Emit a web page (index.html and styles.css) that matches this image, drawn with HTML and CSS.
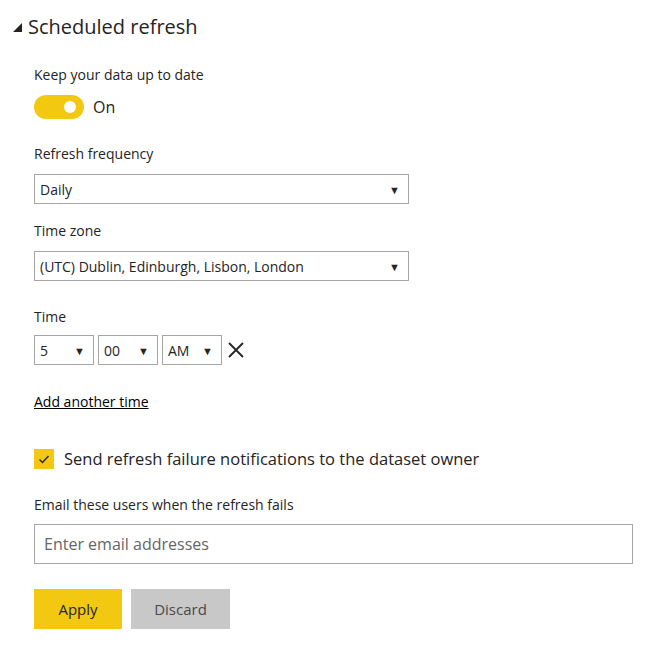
FILE: index.html
```html
<!DOCTYPE html>
<html>
<head>
<meta charset="utf-8">
<link rel="stylesheet" href="styles.css">
</head>
<body>
<div class="panel">
  <div class="heading">
    <svg class="tri" width="9" height="9" viewBox="0 0 9 9"><polygon points="9,0 9,9 0,9" fill="#252423"/></svg>
    <span>Scheduled refresh</span>
  </div>
  <div class="section">
    <div class="label l-keep">Keep your data up to date</div>
    <div class="toggle-row">
      <div class="toggle"><div class="knob"></div></div>
      <span class="on">On</span>
    </div>
    <div class="label l-freq">Refresh frequency</div>
    <div class="select wide"><span>Daily</span><span class="arrow">▼</span></div>
    <div class="label l-tz">Time zone</div>
    <div class="select wide"><span>(UTC) Dublin, Edinburgh, Lisbon, London</span><span class="arrow">▼</span></div>
    <div class="label l-time">Time</div>
    <div class="time-row">
      <div class="select small"><span>5</span><span class="arrow">▼</span></div>
      <div class="select small"><span>00</span><span class="arrow">▼</span></div>
      <div class="select small"><span>AM</span><span class="arrow">▼</span></div>
      <svg class="close" width="16" height="16" viewBox="0 0 16 16"><path d="M1 1 L15 15 M15 1 L1 15" stroke="#252423" stroke-width="1.8" fill="none"/></svg>
    </div>
    <a class="add-link">Add another time</a>
    <div class="check-row">
      <div class="checkbox"><svg width="20" height="20" viewBox="0 0 20 20"><path d="M5.5 10.5 L8.5 13.5 L14.5 7" stroke="#252423" stroke-width="1.4" fill="none"/></svg></div>
      <span class="check-text">Send refresh failure notifications to the dataset owner</span>
    </div>
    <div class="label l-email">Email these users when the refresh fails</div>
    <div class="email">Enter email addresses</div>
    <div class="buttons">
      <div class="btn apply">Apply</div>
      <div class="btn discard">Discard</div>
    </div>
  </div>
</div>
</body>
</html>
```
FILE: styles.css
```css
html, body {
  margin: 0;
  padding: 0;
  background: #ffffff;
}
body {
  font-family: "Open Sans", "Noto Sans", sans-serif;
  color: #252423;
}
.panel {
  padding: 12px 0 0 13px;
}
.heading {
  display: flex;
  align-items: center;
  gap: 6px;
  height: 28px;
  font-size: 20px;
  color: #252423;
}
.tri {
  margin-top: 2px;
}
.section {
  display: flex;
  flex-direction: column;
  align-items: flex-start;
  padding-left: 21px;
}
.label {
  font-size: 14px;
  line-height: 19px;
  color: #252423;
}
.l-keep { margin-top: 25px; }
.toggle-row {
  display: flex;
  align-items: center;
  gap: 9px;
  margin-top: 11px;
}
.toggle {
  width: 50px;
  height: 24px;
  border-radius: 12px;
  background: #f2c811;
  position: relative;
}
.knob {
  position: absolute;
  top: 6px;
  right: 8px;
  width: 12px;
  height: 12px;
  border-radius: 50%;
  background: #fff;
}
.on {
  font-size: 16px;
}
.l-freq { margin-top: 25px; }
.l-tz { margin-top: 17px; }
.l-time { margin-top: 26px; }
.select {
  box-sizing: border-box;
  display: flex;
  align-items: center;
  justify-content: space-between;
  border: 1px solid #a6a6a6;
  height: 30px;
  font-size: 14px;
  padding: 0 8px 0 5px;
  margin-top: 11px;
  background: #fff;
}
.wide { width: 375px; }
.arrow {
  font-size: 11px;
  color: #252423;
}
.time-row {
  display: flex;
  align-items: center;
  gap: 4px;
  margin-top: 0;
}
.small {
  width: 60px;
  margin-top: 9px;
}
.close {
  margin-left: 2px;
  margin-top: 9px;
}
.add-link {
  margin-top: 27px;
  font-size: 14px;
  line-height: 19px;
  color: #000;
  text-decoration: underline;
}
.check-row {
  display: flex;
  align-items: center;
  gap: 10px;
  margin-top: 36px;
}
.checkbox {
  width: 20px;
  height: 20px;
  background: #f2c811;
}
.checkbox svg { display: block; }
.check-text {
  font-size: 16.5px;
}
.l-email { margin-top: 25px; }
.email {
  box-sizing: border-box;
  width: 599px;
  height: 40px;
  margin-top: 10px;
  border: 1px solid #a6a6a6;
  padding: 0 9px;
  display: flex;
  align-items: center;
  font-size: 16px;
  color: #666666;
}
.buttons {
  display: flex;
  gap: 9px;
  margin-top: 25px;
}
.btn {
  height: 40px;
  display: flex;
  align-items: center;
  justify-content: center;
  font-size: 15px;
}
.apply {
  width: 88px;
  background: #f2c811;
  color: #252423;
}
.discard {
  width: 99px;
  background: #c8c8c8;
  color: #4a4a4a;
}
```
